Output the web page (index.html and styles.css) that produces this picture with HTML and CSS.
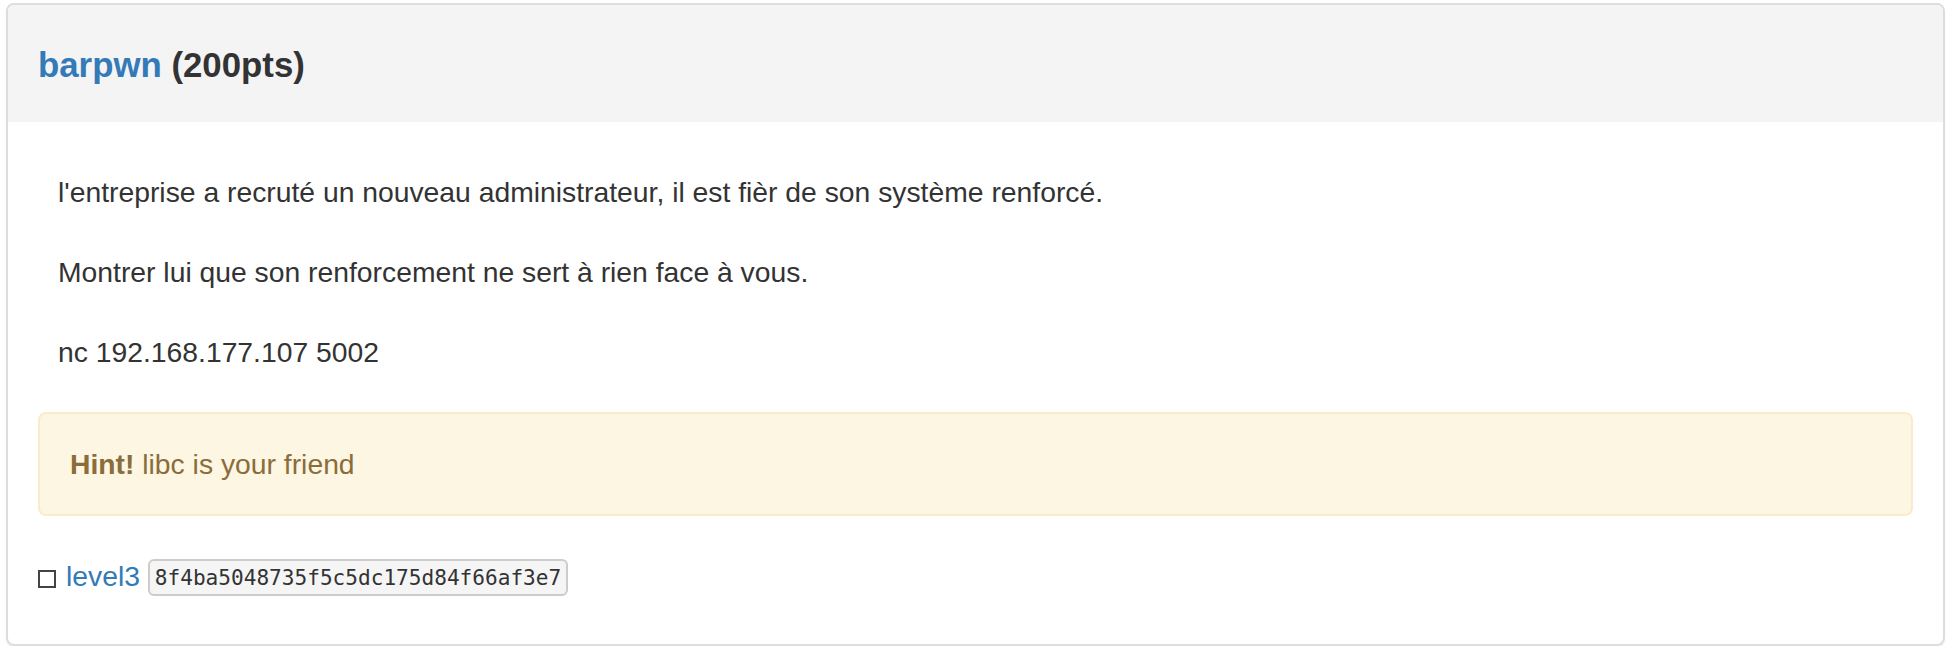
FILE: index.html
```html
<!DOCTYPE html>
<html lang="fr">
<head>
<meta charset="utf-8">
<title>barpwn</title>
<link rel="stylesheet" href="styles.css">
</head>
<body>
<div class="page">
  <div class="panel">
    <div class="panel-heading">
      <h3 class="panel-title"><a class="link" href="#">barpwn</a> (200pts)</h3>
    </div>
    <div class="panel-body">
      <div class="desc">
        <p>l'entreprise a recruté un nouveau administrateur, il est fièr de son système renforcé.</p>
        <p>Montrer lui que son renforcement ne sert à rien face à vous.</p>
        <p>nc 192.168.177.107 5002</p>
      </div>
      <div class="alert"><strong>Hint!</strong> libc is your friend</div>
      <div class="flag-row"><span class="check"></span><a class="link" href="#">level3</a> <code class="hash">8f4ba5048735f5c5dc175d84f66af3e7</code></div>
    </div>
  </div>
</div>
</body>
</html>
```
FILE: styles.css
```css
html, body {
  margin: 0;
  padding: 0;
  background: #fff;
}
body {
  font-family: "Liberation Sans", Arial, Helvetica, sans-serif;
  font-size: 28.3px;
  line-height: 40px;
  color: #333;
}
.page {
  padding: 3px 5px 0 6px;
}
.panel {
  border: 2px solid #ddd;
  border-radius: 8px;
  box-shadow: 0 2px 2px rgba(0, 0, 0, 0.05);
  background: #fff;
}
.panel-heading {
  background: #f4f4f4;
  padding: 20px 30px 18px;
  border-top-left-radius: 6px;
  border-top-right-radius: 6px;
}
.panel-title {
  margin: 0;
  font-size: 34.8px;
  line-height: 79px;
  font-weight: bold;
  color: #333;
}
.link {
  color: #337ab7;
  text-decoration: none;
}
.panel-body {
  padding: 30px 30px 30px;
}
.desc {
  padding: 20px 20px 0;
}
.desc p {
  margin: 0 0 40px;
}
.alert {
  background: #fcf6e2;
  border: 2px solid #faebcc;
  border-radius: 8px;
  color: #8a6d3b;
  padding: 30px 30px;
  margin-bottom: 40px;
}
.alert strong {
  font-weight: bold;
}
.flag-row {
  margin-bottom: 18px;
}
.check {
  display: inline-block;
  box-sizing: border-box;
  width: 18px;
  height: 18px;
  border: 2px solid #444;
  margin-right: 10px;
  vertical-align: -2px;
}
.hash {
  display: inline-block;
  font-family: "DejaVu Sans Mono", "Liberation Mono", monospace;
  font-size: 21.1px;
  line-height: 25px;
  color: #333;
  background: #f5f5f5;
  border: 2px solid #ccc;
  border-radius: 6px;
  padding: 4px 5px;
  vertical-align: 1px;
}
```
